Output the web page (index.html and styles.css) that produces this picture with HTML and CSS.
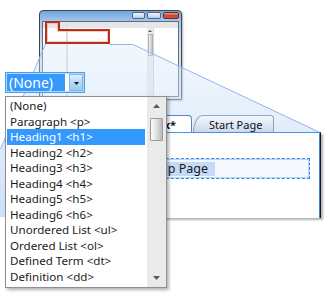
FILE: index.html
```html
<!DOCTYPE html>
<html>
<head>
<meta charset="utf-8">
<link rel="stylesheet" href="styles.css">
</head>
<body>
<div class="scene">
  <div class="win">
    <div class="win-title">
      <span class="wbtn wmin"></span>
      <span class="wbtn wmax"></span>
      <span class="wbtn wclose"></span>
    </div>
    <div class="win-body">
      <div class="win-toolbar"></div>
      <div class="win-main">
        <div class="win-left"></div>
        <div class="win-center"></div>
        <div class="win-scroll"><span class="win-arrow"></span><span class="win-thumb"></span></div>
        <div class="win-right"></div>
      </div>
    </div>
  </div>

  <svg class="magnifier" width="329" height="300" viewBox="0 0 329 300">
    <defs>
      <linearGradient id="mg" x1="0" y1="44" x2="0" y2="217" gradientUnits="userSpaceOnUse">
        <stop offset="0" stop-color="#d9e8f9" stop-opacity="0.35"/>
        <stop offset="1" stop-color="#bcd4f2" stop-opacity="0.75"/>
      </linearGradient>
    </defs>
    <polygon points="45,44 133,44 320,132 320,217 0,217 0,149" fill="url(#mg)"/>
    <polyline points="0.5,149 45.5,44" fill="none" stroke="#93b8ea" stroke-width="1"/>
    <polyline points="110,44.5 133,44.5 320,132.5" fill="none" stroke="#93b8ea" stroke-width="1"/>
    <path d="M46 22 H59 V30 H109 V43 H46 Z" fill="none" stroke="#b3321f" stroke-width="2"/>
    <path d="M47.5 23.5 H57.5 V31.5 H107.5 V41.5 H47.5 Z" fill="none" stroke="#f2a58e" stroke-width="1" opacity="0.6"/>
  </svg>

  <div class="zoom-panel">
    <div class="tabs">
      <div class="tab tab-active">Default.aspx*</div>
      <div class="tab tab-start">Start Page</div>
    </div>
    <div class="doc">
      <div class="sel-box"><span class="hl">Startup Page</span></div>
    </div>
  </div>

  <div class="picker">
    <div class="combo">
      <span class="combo-value">(None)</span>
      <span class="combo-btn">
        <svg width="5" height="3" viewBox="0 0 5 3"><path d="M0 0 H5 L2.5 3 Z" fill="#111"/></svg>
      </span>
    </div>
    <div class="listbox">
      <ul class="items">
        <li class="item">(None)</li>
        <li class="item">Paragraph &lt;p&gt;</li>
        <li class="item item-sel">Heading1 &lt;h1&gt;</li>
        <li class="item">Heading2 &lt;h2&gt;</li>
        <li class="item">Heading3 &lt;h3&gt;</li>
        <li class="item">Heading4 &lt;h4&gt;</li>
        <li class="item">Heading5 &lt;h5&gt;</li>
        <li class="item">Heading6 &lt;h6&gt;</li>
        <li class="item">Unordered List &lt;ul&gt;</li>
        <li class="item">Ordered List &lt;ol&gt;</li>
        <li class="item">Defined Term &lt;dt&gt;</li>
        <li class="item">Definition &lt;dd&gt;</li>
      </ul>
      <div class="scroll">
        <span class="sb-btn"><svg width="7" height="4" viewBox="0 0 7 4"><path d="M0 4 L3.5 0 L7 4 Z" fill="#5a5a5a"/></svg></span>
        <span class="sb-thumb"></span>
        <span class="sb-space"></span>
        <span class="sb-btn"><svg width="7" height="4" viewBox="0 0 7 4"><path d="M0 0 H7 L3.5 4 Z" fill="#5a5a5a"/></svg></span>
      </div>
    </div>
  </div>
</div>
</body>
</html>
```

FILE: styles.css
```css
* { box-sizing: border-box; }
html, body { margin: 0; padding: 0; background: #fff; }
body {
  width: 329px;
  height: 300px;
  overflow: hidden;
  font-family: "Noto Sans", "Open Sans", sans-serif;
}
.scene { position: relative; width: 329px; height: 300px; }

/* small window thumbnail */
.win {
  position: absolute;
  left: 39px;
  top: 10px;
  width: 143px;
  height: 90px;
  border: 1px solid #3f4650;
  border-radius: 4px 4px 1px 1px;
  background: linear-gradient(#6fa2de, #a7c8ee 12%, #cddff4 40%, #dce9f7);
  padding: 0 2px 2px;
  display: flex;
  flex-direction: column;
  box-shadow: 1px 1px 2px rgba(0,0,0,0.3);
}
.win-title {
  height: 10px;
  display: flex;
  justify-content: flex-end;
  align-items: flex-start;
  gap: 2px;
  padding-top: 1px;
}
.wbtn {
  display: block;
  height: 7px;
  border: 1px solid #56667e;
  border-radius: 2px;
  background: linear-gradient(#eef3f9, #b9cce4);
}
.wmin { width: 13px; }
.wmax { width: 14px; }
.wclose {
  width: 16px;
  border-color: #6b2a20;
  background: linear-gradient(#e9a091, #c8402c 55%, #d9553c);
}
.win-body {
  flex: 1;
  background: #fff;
  border: 1px solid #5d6b7e;
  display: flex;
  flex-direction: column;
}
.win-toolbar { height: 6px; background: #e6e6e6; }
.win-main { flex: 1; display: flex; }
.win-left { width: 25px; border-right: 2px solid #dedede; }
.win-center { flex: 1; }
.win-scroll {
  width: 6px;
  background: #ebebeb;
  display: flex;
  flex-direction: column;
  align-items: center;
  padding-top: 2px;
  gap: 2px;
}
.win-arrow {
  width: 0; height: 0;
  border-left: 2px solid transparent;
  border-right: 2px solid transparent;
  border-bottom: 2px solid #555;
}
.win-thumb { width: 5px; height: 22px; background: linear-gradient(to right, #f2f2f2, #c4c4c4); border: 1px solid #b0b0b0; }
.win-right { width: 25px; border-left: 1px solid #d6d6d6; }

/* magnifier overlay */
.magnifier { position: absolute; left: 0; top: 0; pointer-events: none; }

/* magnified panel */
.zoom-panel {
  position: absolute;
  left: 60px;
  top: 113px;
  width: 261px;
  display: flex;
  flex-direction: column;
}
.tabs {
  height: 19px;
  display: flex;
  padding-top: 2px;
  padding-left: 40px;
}
.tab {
  font-size: 11px;
  color: #111;
  display: flex;
  align-items: center;
  white-space: nowrap;
  overflow: hidden;
}
.tab-active {
  width: 92px;
  justify-content: flex-end;
  padding-right: 15px;
  background: #fff;
  border: 1px solid #4a87d6;
  border-bottom: none;
  border-radius: 0 4px 0 0;
  font-weight: 700;
}
.tab-start {
  width: 81px;
  margin-left: 1px;
  padding-left: 15px;
  background: linear-gradient(#f3f7fc, #c9d9ee);
  border: 1px solid #8fa7c7;
  border-bottom: none;
  border-radius: 10px 4px 0 0 / 17px 4px 0 0;
}
.doc {
  height: 86px;
  background: #fff;
  border-top: 1px solid #4d8fe0;
  border-right: 1px solid #0d1a33;
  box-shadow: inset -1px 0 #3f83dc, 2px 2px 2px rgba(0,0,0,0.3);
  padding: 25px 10px 0 20px;
}
.sel-box {
  height: 21px;
  border: 1px dashed #3585e6;
  box-shadow: inset 0 0 0 1px #b9d5f6;
  background: #f5f9ff;
  display: flex;
  align-items: center;
  padding-left: 2px;
}
.hl {
  width: 132px;
  height: 14px;
  line-height: 14px;
  text-align: right;
  padding-right: 7px;
  background: #c3dbf7;
  font-size: 12.5px;
  color: #1a1a1a;
  white-space: nowrap;
}

/* dropdown picker */
.picker {
  position: absolute;
  left: 5px;
  top: 72px;
  display: flex;
  flex-direction: column;
  align-items: flex-start;
  gap: 3px;
}
.combo {
  width: 80px;
  height: 21px;
  border: 1px solid #4d9cf0;
  box-shadow: inset 0 0 0 1px #b6d7f8;
  background: #fff;
  display: flex;
  padding: 1px;
}
.combo-value {
  width: 58px;
  background: #3399ff;
  color: #fff;
  font-size: 14px;
  line-height: 17px;
  padding-left: 2px;
  white-space: nowrap;
}
.combo-btn {
  width: 14px;
  margin-left: 4px;
  background: linear-gradient(#e4f1fc, #b6d8f4 50%, #9dcbf0);
  border: 1px solid #7fb5e6;
  display: flex;
  align-items: center;
  justify-content: center;
  padding-top: 2px;
}
.listbox {
  width: 162px;
  height: 192px;
  border: 1px solid #8a8f98;
  background: #fff;
  display: flex;
  box-shadow: 2px 2px 3px rgba(0,0,0,0.3);
}
.items {
  flex: 1;
  list-style: none;
  margin: 0;
  padding: 1px 2px 0 1px;
}
.item {
  height: 15.55px;
  line-height: 15.55px;
  padding-left: 3px;
  font-size: 11.6px;
  color: #1b1b1b;
  white-space: nowrap;
}
.item-sel { background: #3399ff; color: #fff; }
.scroll {
  width: 19px;
  background: #eaeaea;
  display: flex;
  flex-direction: column;
  align-items: center;
}
.sb-btn {
  height: 18px;
  width: 19px;
  display: flex;
  align-items: center;
  justify-content: center;
}
.sb-thumb {
  width: 13px;
  height: 23px;
  margin-top: 3px;
  border: 1px solid #9a9a9a;
  border-radius: 1px;
  background: linear-gradient(to right, #fbfbfb, #e0e0e0 50%, #b9b9b9);
}
.sb-space { flex: 1; }
```
